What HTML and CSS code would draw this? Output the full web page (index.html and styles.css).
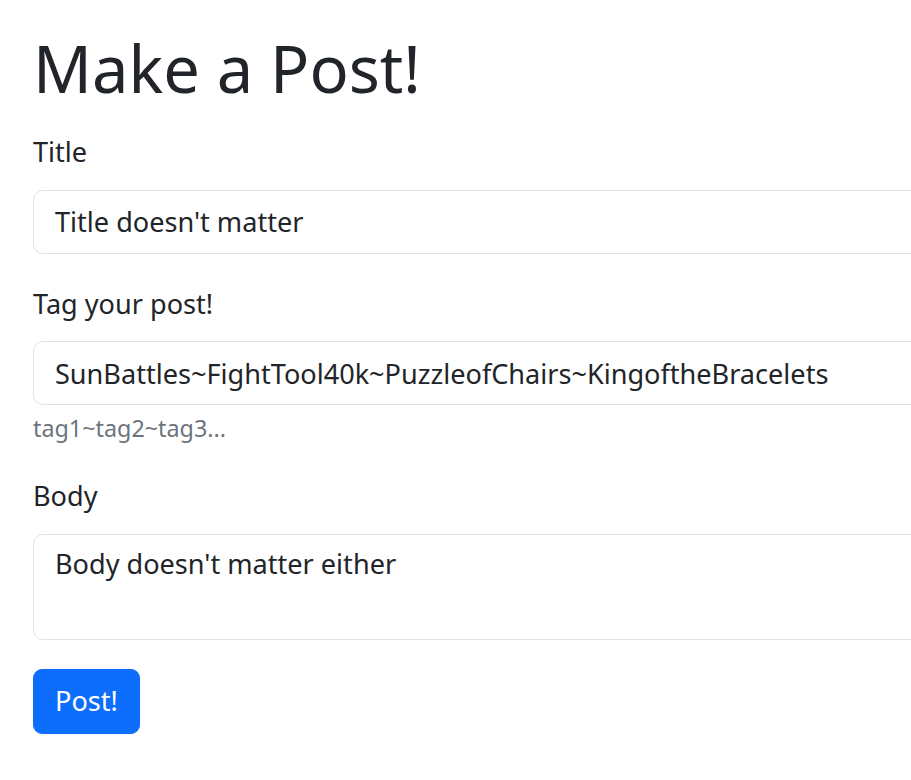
FILE: index.html
```html
<!DOCTYPE html>
<html lang="en">
<head>
<meta charset="utf-8">
<title>Make a Post!</title>
<link rel="stylesheet" href="styles.css">
</head>
<body>
<main class="container">
  <h1 class="page-title">Make a Post!</h1>
  <form class="post-form">
    <div class="field">
      <label class="field-label" for="title">Title</label>
      <input class="field-input" id="title" type="text" value="Title doesn't matter">
    </div>
    <div class="field">
      <label class="field-label" for="tags">Tag your post!</label>
      <input class="field-input" id="tags" type="text" value="SunBattles~FightTool40k~PuzzleofChairs~KingoftheBracelets">
      <div class="field-help">tag1~tag2~tag3...</div>
    </div>
    <div class="field">
      <label class="field-label" for="body">Body</label>
      <textarea class="field-input field-textarea" id="body" rows="2">Body doesn't matter either</textarea>
    </div>
    <button class="btn-primary" type="button">Post!</button>
  </form>
</main>
</body>
</html>
```

FILE: styles.css
```css
html, body {
  overflow: hidden;
}
body {
  margin: 0;
  background: #fff;
  color: #212529;
  font-family: "Noto Sans", "Open Sans", sans-serif;
  font-size: 27.1px;
  line-height: 1.5;
}
.container {
  width: 1000px;
  padding: 28px 0 0 33px;
}
.page-title {
  margin: 0 0 24px;
  font-size: 65px;
  font-weight: 400;
  line-height: 80px;
}
.post-form {
  display: flex;
  flex-direction: column;
  align-items: flex-start;
}
.field {
  display: flex;
  flex-direction: column;
  width: 100%;
  margin-bottom: 30px;
}
.field-label {
  display: block;
  margin-bottom: 17px;
}
.field-input {
  box-sizing: border-box;
  width: 100%;
  height: 64px;
  margin: 0;
  padding: 11px 21px;
  border: 1.5px solid #dee2e6;
  border-radius: 10px;
  background: #fff;
  color: #212529;
  font: inherit;
  line-height: 40px;
  outline: none;
}
.field-textarea {
  height: 106px;
  padding-top: 9px;
  resize: none;
  overflow: hidden;
}
.field-help {
  margin-top: 6px;
  color: #6c757d;
  font-size: 23.33px;
  line-height: 35px;
}
.btn-primary {
  box-sizing: border-box;
  height: 65px;
  width: 107px;
  margin-top: -1px;
  padding: 0;
  border: 1px solid #0d6efd;
  border-radius: 9px;
  background: #0d6efd;
  color: #fff;
  font: inherit;
  line-height: 40px;
}
```
